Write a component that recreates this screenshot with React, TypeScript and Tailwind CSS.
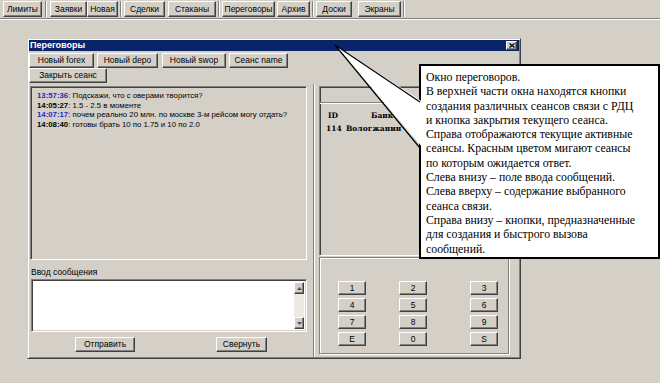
import React from "react";

const raised =
  "bg-[#d4d0c8] border border-t-white border-l-white border-r-[#404040] border-b-[#404040] shadow-[inset_-1px_-1px_0_#808080] flex items-center justify-center text-black leading-none";
const sunken =
  "border border-t-[#808080] border-l-[#808080] border-r-white border-b-white shadow-[inset_1px_1px_0_#404040,inset_-1px_-1px_0_#d4d0c8]";

function Sep() {
  return <div className="w-[2px] h-[16px] border-l border-l-[#808080] border-r border-r-white" />;
}

export default function App() {
  const msgs: { t: string; m: string; blue: boolean }[] = [
    { t: "13:57:36", m: "Подскажи, что с оверами творится?", blue: true },
    { t: "14:05:27", m: "1.5 - 2.5 в моменте", blue: false },
    { t: "14:07:17", m: "почем реально 20 млн. по москве 3-м рейсом могу отдать?", blue: true },
    { t: "14:08:40", m: "готовы брать 10 по 1.75 и 10 по 2.0", blue: false },
  ];
  const nums = [
    ["1", "2", "3"],
    ["4", "5", "6"],
    ["7", "8", "9"],
    ["E", "0", "S"],
  ];
  return (
    <div className="relative w-[660px] h-[383px] overflow-hidden bg-[#d4d0c8] font-['Liberation_Sans',Arial,sans-serif] text-[8.5px] text-black">
      {/* toolbar */}
      <div className="h-[19px] border-b border-b-[#808080] shadow-[0_1px_0_white] flex items-start pt-[1px]">
        <div className={`${raised} ml-[3px] w-[39px] h-[16px]`}>Лимиты</div>
        <div className="ml-[3px]"><Sep /></div>
        <div className={`${raised} ml-[3px] w-[37px] h-[16px]`}>Заявки</div>
        <div className={`${raised} w-[31px] h-[16px]`}>Новая</div>
        <div className="ml-[2px]"><Sep /></div>
        <div className={`${raised} ml-[2px] w-[41px] h-[16px]`}>Сделки</div>
        <div className={`${raised} ml-[3px] w-[48px] h-[16px]`}>Стаканы</div>
        <div className="ml-[2px]"><Sep /></div>
        <div className={`${raised} ml-[2px] w-[53px] h-[16px]`}>Переговоры</div>
        <div className={`${raised} ml-[2px] w-[33px] h-[16px]`}>Архив</div>
        <div className="ml-[2px]"><Sep /></div>
        <div className={`${raised} ml-[2px] w-[36px] h-[16px]`}>Доски</div>
        <div className={`${raised} ml-[6px] w-[43px] h-[16px]`}>Экраны</div>
        <div className="ml-[2px]"><Sep /></div>
      </div>

      {/* window */}
      <div className="ml-[27px] mt-[19px] w-[494px] h-[321px] p-[1px] border border-t-[#d4d0c8] border-l-[#d4d0c8] border-r-[#404040] border-b-[#404040] shadow-[inset_1px_1px_0_white,inset_-1px_-1px_0_#808080] flex flex-col">
        {/* title bar */}
        <div className="h-[11px] bg-[#0a246a] flex items-center justify-between pl-[1px] pr-[2px]">
          <span className="text-white font-bold text-[9px] leading-none">Переговоры</span>
          <div className={`${raised} w-[11px] h-[9px]`}>
            <svg width="6" height="5" viewBox="0 0 6 5">
              <path d="M0.5 0.5 L5.5 4.5 M5.5 0.5 L0.5 4.5" stroke="black" strokeWidth="1.2" />
            </svg>
          </div>
        </div>
        {/* buttons */}
        <div className="flex mt-[2px]">
          <div className={`${raised} w-[65px] h-[15px]`}>Новый forex</div>
          <div className={`${raised} ml-[3px] w-[61px] h-[15px]`}>Новый depo</div>
          <div className={`${raised} ml-[4px] w-[64px] h-[15px]`}>Новый swop</div>
          <div className={`${raised} ml-[3px] w-[59px] h-[15px]`}>Сеанс name</div>
        </div>
        <div className="flex">
          <div className={`${raised} w-[78px] h-[15px]`}>Закрыть сеанс</div>
        </div>
        {/* main */}
        <div className="flex flex-1">
          {/* left */}
          <div className="w-[284px] flex flex-col">
            <div className={`${sunken} ml-[1px] mt-[3px] w-[277px] h-[174px] pl-[6px] pt-[4px] text-[7.8px] leading-[9.7px]`}>
              {msgs.map((x) => (
                <div key={x.t} className="whitespace-nowrap">
                  <span className={x.blue ? "font-bold text-[#2828c8]" : "font-bold"}>{x.t}</span>
                  <span>: {x.m}</span>
                </div>
              ))}
            </div>
            <div className="ml-[2px] mt-[5px] h-[14px] leading-[14px]">Ввод сообщения</div>
            <div className={`${sunken} ml-[2px] w-[276px] h-[53px] bg-white flex justify-end p-[2px]`}>
              <div className="w-[10px] h-full flex flex-col bg-[#ece9e2]">
                <div className={`${raised} w-[10px] h-[12px]`}>
                  <svg width="5" height="3" viewBox="0 0 5 3"><path d="M0 3 L2.5 0 L5 3 Z" fill="#505050" /></svg>
                </div>
                <div className="flex-1" />
                <div className={`${raised} w-[10px] h-[12px]`}>
                  <svg width="5" height="3" viewBox="0 0 5 3"><path d="M0 0 L2.5 3 L5 0 Z" fill="#505050" /></svg>
                </div>
              </div>
            </div>
            <div className="flex mt-[5px]">
              <div className={`${raised} ml-[46px] w-[60px] h-[15px]`}>Отправить</div>
              <div className={`${raised} ml-[81px] w-[51px] h-[15px]`}>Свернуть</div>
            </div>
          </div>
          {/* right */}
          <div className="flex-1 border-l border-l-[#808080] shadow-[inset_1px_0_0_white] mt-[1px] pl-[5px] flex flex-col">
            <div className={`${sunken} mt-[2px] w-[191px] h-[170px] flex flex-col`}>
              <div className="h-[16px] border-b border-b-[#808080] shadow-[0_1px_0_white]" />
              <div className="flex font-bold font-['DejaVu_Serif',serif] text-[7.5px] mt-[6px] leading-[13px]">
                <div className="w-[22px] pl-[8px]">ID</div>
                <div className="pl-[29px]">Банк</div>
              </div>
              <div className="flex font-bold font-['DejaVu_Serif',serif] text-[7.5px] leading-[13px]">
                <div className="w-[26px] pl-[6px]">114</div>
                <div>Вологжанин</div>
              </div>
            </div>
            <div className="mt-[1px] w-[190px] h-[97px] border border-[#808080] shadow-[inset_1px_1px_0_white,1px_1px_0_white] pt-[23px] flex flex-col gap-[3px]">
              {nums.map((row, i) => (
                <div key={i} className="flex">
                  <div className={`${raised} ml-[18px] w-[28px] h-[14px]`}>{row[0]}</div>
                  <div className={`${raised} ml-[33px] w-[28px] h-[14px]`}>{row[1]}</div>
                  <div className={`${raised} ml-[43px] w-[28px] h-[14px]`}>{row[2]}</div>
                </div>
              ))}
            </div>
          </div>
        </div>
      </div>

      {/* callout box */}
      <div className="absolute left-[419px] top-[64px] w-[241px] h-[195px] bg-white border-2 border-black pl-[5px] pt-[4px] font-['Liberation_Serif','Times_New_Roman',serif] text-[11.8px] leading-[14.3px] whitespace-nowrap">
        <div>Окно переговоров.</div>
        <div>В верхней части окна находятся кнопки</div>
        <div>создания различных сеансов связи с РДЦ</div>
        <div>и кнопка закрытия текущего сеанса.</div>
        <div>Справа отображаются текущие активные</div>
        <div>сеансы. Красным цветом мигают сеансы</div>
        <div>по которым ожидается ответ.</div>
        <div>Слева внизу – поле ввода сообщений.</div>
        <div>Слева вверху – содержание выбранного</div>
        <div>сеанса связи.</div>
        <div>Справа внизу – кнопки, предназначенные</div>
        <div>для создания и быстрого вызова</div>
        <div>сообщений.</div>
      </div>
      <svg className="absolute left-0 top-0 pointer-events-none" width="660" height="383" viewBox="0 0 660 383">
        <polygon points="335,45 423,102 423,148" fill="white" />
        <path d="M335 45 L420 102 M335 45 L420 148" stroke="black" strokeWidth="1.2" fill="none" />
      </svg>
    </div>
  );
}
